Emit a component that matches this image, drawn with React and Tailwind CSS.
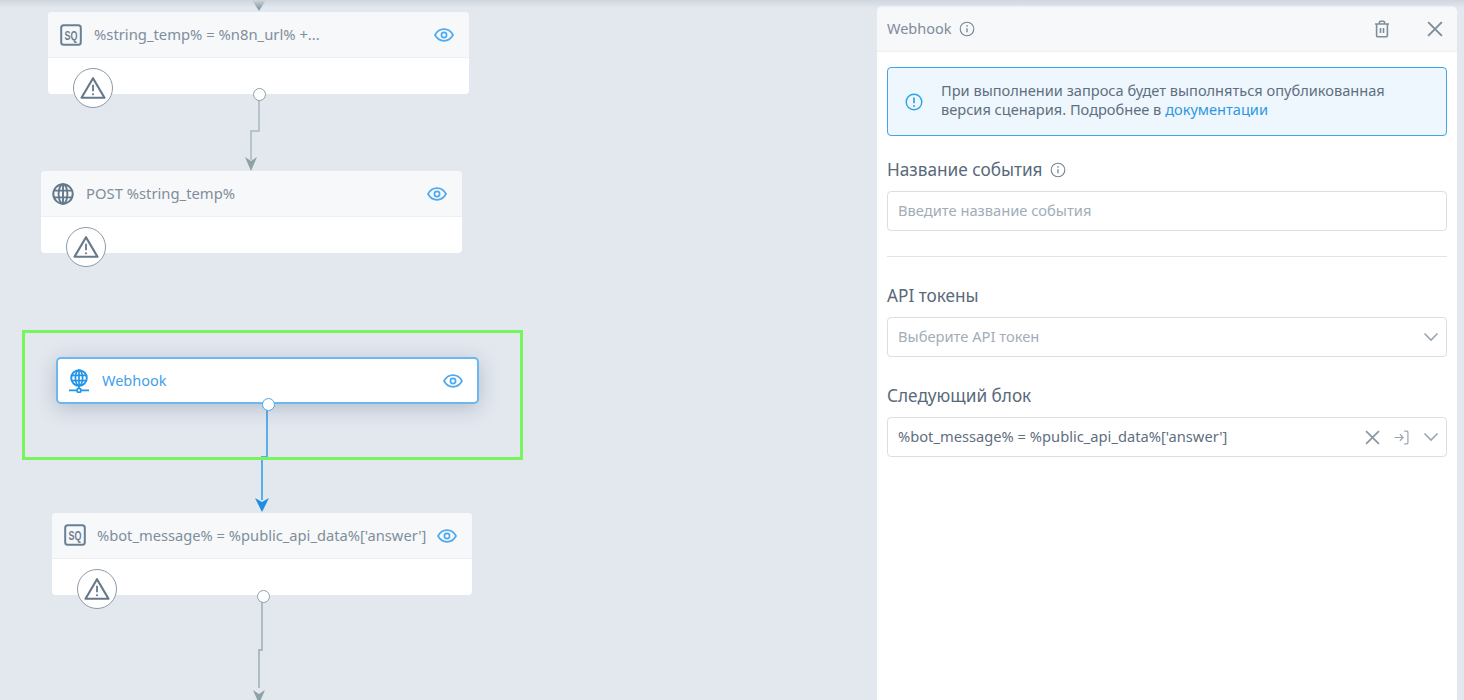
const FONT = "font-['Noto_Sans','Open_Sans',sans-serif]";

function Eye({ className = "" }) {
  return (
    <svg viewBox="0 0 20 14" className={`h-[14px] w-[20px] ${className}`} fill="none" stroke="#4eaaf0" strokeWidth="1.7">
      <path d="M1 7C3 3.4 6.2 1.2 10 1.2S17 3.4 19 7c-2 3.6-5.2 5.8-9 5.8S3 10.6 1 7Z" />
      <circle cx="10" cy="7" r="2.6" />
    </svg>
  );
}

function SqIcon() {
  return (
    <svg viewBox="0 0 22 22" className="h-[22px] w-[22px]" fill="none">
      <rect x="1.2" y="1.2" width="19.6" height="19.6" rx="2.5" stroke="#6b7f93" strokeWidth="2" />
      <text x="11" y="16" textAnchor="middle" fontSize="13" fontWeight="700" fill="#6b7f93" fontFamily="Liberation Sans, sans-serif" textLength="13" lengthAdjust="spacingAndGlyphs">SQ</text>
    </svg>
  );
}

function GlobeIcon() {
  return (
    <svg viewBox="0 0 22 22" className="h-[22px] w-[22px]" fill="none" stroke="#64788c">
      <circle cx="11" cy="11" r="9.7" strokeWidth="2" />
      <ellipse cx="11" cy="11" rx="4.4" ry="9.7" strokeWidth="1.9" />
      <path d="M11 1.4v19.2M2 7.6h18M2 14.4h18" strokeWidth="1.9" />
    </svg>
  );
}

function WebhookIcon() {
  return (
    <svg viewBox="0 0 22 24" className="h-[24px] w-[22px]" fill="none" stroke="#2395e8">
      <circle cx="11" cy="9" r="7.8" strokeWidth="1.9" />
      <ellipse cx="11" cy="9" rx="3.6" ry="7.8" strokeWidth="1.7" />
      <path d="M3.6 6.4h14.8M3.6 11.6h14.8M11 1.2v15.6M11 17v3" strokeWidth="1.7" />
      <path d="M1 21.4h7.6M13.4 21.4H21" strokeWidth="1.8" />
      <circle cx="11" cy="21.4" r="2" strokeWidth="1.7" />
    </svg>
  );
}

function Warning() {
  return (
    <div className="flex h-[40px] w-[40px] items-center justify-center rounded-full border border-[#8c9aa8] bg-white">
      <svg viewBox="0 0 24 22" className="h-[24px] w-[26px]" fill="none">
        <path d="M12 2 22.6 20H1.4Z" stroke="#66798c" strokeWidth="2" strokeLinejoin="round" />
        <path d="M12 8v6" stroke="#66798c" strokeWidth="1.7" />
        <circle cx="12" cy="16.8" r="1" fill="#66798c" />
      </svg>
    </div>
  );
}

function InfoCircle() {
  return (
    <svg viewBox="0 0 16 16" className="h-[16px] w-[16px]" fill="none" stroke="#75838f" strokeWidth="1.1">
      <circle cx="8" cy="8" r="6.8" />
      <path d="M8 7.2v4" strokeWidth="1.3" />
      <circle cx="8" cy="4.9" r="0.8" fill="#75838f" stroke="none" />
    </svg>
  );
}

function Chevron() {
  return (
    <svg viewBox="0 0 16 10" className="h-[10px] w-[16px]" fill="none" stroke="#9aa5b0" strokeWidth="1.6">
      <path d="M1.5 1.5 8 8l6.5-6.5" />
    </svg>
  );
}

function Cross({ size = "h-[15px] w-[15px]", color = "#8a98a5", w = 1.6 }) {
  return (
    <svg viewBox="0 0 14 14" className={size} fill="none" stroke={color} strokeWidth={w}>
      <path d="M1 1l12 12M13 1 1 13" />
    </svg>
  );
}

function Node({ pos, icon, title, pad = "pl-[12px]", gap = "gap-[12px]", size = "text-[14.8px]" }) {
  return (
    <div className={`absolute flex h-[82px] flex-col rounded-[4px] bg-white ${pos}`}>
      <div className={`flex h-[46px] items-center justify-between rounded-t-[4px] border-b border-[#eceff3] bg-[#f6f8fa] pr-[15px] ${pad}`}>
        <div className={`flex min-w-0 items-center ${gap}`}>
          {icon}
          <span className={`whitespace-nowrap pb-[1px] text-[#7f8e9c] ${size}`}>{title}</span>
        </div>
        <Eye />
      </div>
      <div className="absolute left-[25px] top-[56px]">
        <Warning />
      </div>
    </div>
  );
}

function Port({ pos, color }) {
  return <div className={`absolute h-[13px] w-[13px] rounded-full border bg-white ${pos} ${color}`} />;
}

function Canvas() {
  return (
    <div className="relative h-full flex-1">
      <svg className="absolute left-0 top-0" width="870" height="700" fill="none">
        <path d="M252 0 L259 11 L266 0 Z" fill="#8ea1a6" />
        <path d="M259 99V131H251V160" stroke="#a9b8bd" strokeWidth="1.5" />
        <path d="M245 157 L251 161 L257 157 L251 171 Z" fill="#8ea1a6" />
        <path d="M267 408V457H262V500" stroke="#5aaeec" strokeWidth="2" />
        <path d="M255 498 L262 502 L269 498 L262 512 Z" fill="#1a8fe3" />
        <path d="M262 600V650H259V688" stroke="#a9b8bd" strokeWidth="1.8" />
        <path d="M253 690 L259 694 L265 690 L259 704 Z" fill="#8ea1a6" />
      </svg>

      <Node pos="left-[48px] top-[12px] w-[421px]" icon={<SqIcon />} title="%string_temp% = %n8n_url% +..." />
      <Node pos="left-[41px] top-[171px] w-[421px]" pad="pl-[11px]" icon={<GlobeIcon />} title="POST %string_temp%" />
      <Node pos="left-[52px] top-[513px] w-[420px]" gap="gap-[11px]" size="text-[14.7px]" icon={<SqIcon />} title="%bot_message% = %public_api_data%['answer']" />

      <div className="absolute left-[22px] top-[330px] h-[130px] w-[501px] border-[3px] border-[#78f55c]" />

      <div className="absolute left-[56px] top-[357px] flex h-[47px] w-[423px] items-center justify-between rounded-[5px] border-2 border-[#6cb7ef] bg-white pl-[10px] pr-[14px] shadow-[0_4px_20px_rgba(70,90,120,0.3)]">
        <div className="flex items-center gap-[12px]">
          <WebhookIcon />
          <span className="text-[14.5px] text-[#3fa1ea]">Webhook</span>
        </div>
        <Eye />
      </div>

      <Port pos="left-[253px] top-[88px]" color="border-[#8ea1a6]" />
      <Port pos="left-[262px] top-[398px]" color="border-[#4eaaf0]" />
      <Port pos="left-[257px] top-[590px]" color="border-[#8ea1a6]" />
    </div>
  );
}

function Label({ children, info }) {
  return (
    <div className="flex h-[22px] items-center gap-[7px] pt-[2px] text-[17.2px] text-[#58697a]">
      <span>{children}</span>
      {info && <InfoCircle />}
    </div>
  );
}

function Field({ children, right }) {
  return (
    <div className="flex h-[40px] items-center justify-between rounded-[4px] border border-[#d9dfe5] bg-white pl-[10px] pr-[7px] text-[14.7px]">
      <span className="pb-[1px]">{children}</span>
      {right}
    </div>
  );
}

function Panel() {
  return (
    <div className="mr-[7px] mt-[6px] flex w-[580px] flex-col rounded-t-[6px] bg-white">
      <div className="flex h-[46px] items-center justify-between rounded-t-[6px] border-b border-[#eef1f4] bg-[#f6f8fa] pl-[10px] pr-[14px]">
        <div className="flex items-center gap-[7px]">
          <span className="text-[14.5px] text-[#7f8c99]">Webhook</span>
          <InfoCircle />
        </div>
        <div className="flex items-center gap-[37px]">
          <svg viewBox="0 0 16 18" className="h-[18px] w-[16px]" fill="none" stroke="#7f8d9b" strokeWidth="1.6">
            <path d="M1 4h14M5.5 4V2.2c0-.6.4-1 1-1h3c.6 0 1 .4 1 1V4M2.6 4v11.4c0 .9.6 1.4 1.4 1.4h8c.8 0 1.4-.5 1.4-1.4V4" />
            <path d="M6.5 8v5M9.5 8v5" />
          </svg>
          <Cross size="h-[16px] w-[16px]" color="#7f8d9b" w={1.7} />
        </div>
      </div>

      <div className="flex flex-col px-[10px] pt-[15px]">
        <div className="flex h-[69px] items-center gap-[18px] rounded-[4px] border border-[#3fa5e6] bg-[#eef7fd] pl-[17px] pr-[16px]">
          <svg viewBox="0 0 18 18" className="h-[18px] w-[18px] shrink-0" fill="none" stroke="#2ba3ea" strokeWidth="1.4">
            <circle cx="9" cy="9" r="7.8" />
            <path d="M9 4.6v5.6" strokeWidth="1.7" />
            <circle cx="9" cy="13" r="1" fill="#2ba3ea" stroke="none" />
          </svg>
          <p className="pb-[3px] text-[14.6px] leading-[19px] text-[#5f6f7f]">
            При выполнении запроса будет выполняться опубликованная
            <br />
            версия сценария. Подробнее в <span className="text-[#2e97e2]">документации</span>
          </p>
        </div>

        <div className="mt-[22px]">
          <Label info>Название события</Label>
        </div>
        <div className="mt-[11px]">
          <Field>
            <span className="text-[#a2adb8]">Введите название события</span>
          </Field>
        </div>

        <div className="mt-[25px] h-px bg-[#dfe4e9]" />

        <div className="mt-[27px]">
          <Label>API токены</Label>
        </div>
        <div className="mt-[11px]">
          <Field right={<Chevron />}>
            <span className="text-[#a2adb8]">Выберите API токен</span>
          </Field>
        </div>

        <div className="mt-[27px]">
          <Label>Следующий блок</Label>
        </div>
        <div className="mt-[11px]">
          <Field
            right={
              <div className="flex items-center gap-[14px]">
                <Cross />
                <svg viewBox="0 0 14 14" className="h-[15px] w-[15px]" fill="none" stroke="#9aa5b0" strokeWidth="1.1">
                  <path d="M0.5 7H8M5.5 4l3 3-3 3M9.5 1H12c.6 0 1 .4 1 1v10c0 .6-.4 1-1 1H9.5" />
                </svg>
                <Chevron />
              </div>
            }
          >
            <span className="text-[#5f6f7f]">%bot_message% = %public_api_data%['answer']</span>
          </Field>
        </div>
      </div>
    </div>
  );
}

export default function App() {
  return (
    <div className={`relative flex h-[700px] w-[1464px] overflow-hidden bg-[#e3e8ef] ${FONT}`}>
      <Canvas />
      <Panel />
      <div className="pointer-events-none absolute left-0 top-0 h-[8px] w-full bg-gradient-to-b from-[#cfd6de] to-transparent" />
    </div>
  );
}
